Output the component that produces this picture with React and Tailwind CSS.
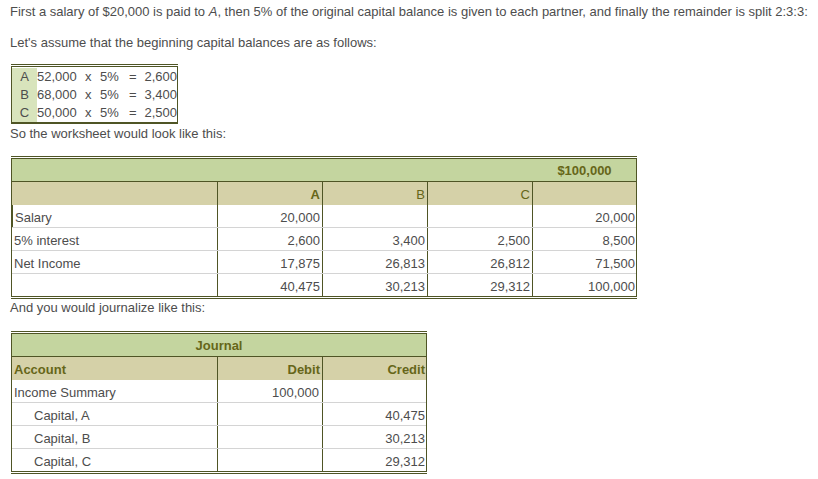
import React from "react";

const box = [
  { k: "A", base: "52,000", amt: "2,600" },
  { k: "B", base: "68,000", amt: "3,400" },
  { k: "C", base: "50,000", amt: "2,500" },
];

const sheet = [
  { label: "Salary", a: "20,000", b: "", c: "", t: "20,000", mark: true },
  { label: "5% interest", a: "2,600", b: "3,400", c: "2,500", t: "8,500" },
  { label: "Net Income", a: "17,875", b: "26,813", c: "26,812", t: "71,500" },
  { label: "", a: "40,475", b: "30,213", c: "29,312", t: "100,000" },
];

const journal = [
  { acct: "Income Summary", dr: "100,000", cr: "", indent: false },
  { acct: "Capital, A", dr: "", cr: "40,475", indent: true },
  { acct: "Capital, B", dr: "", cr: "30,213", indent: true },
  { acct: "Capital, C", dr: "", cr: "29,312", indent: true },
];

// rows are 23px tall with their 1px rule, so cells themselves are 22px
function Cell({ children, className = "", tall = false }) {
  return (
    <div className={`${tall ? "h-[23px]" : "h-[22px]"} pt-[3px] leading-[19px] whitespace-nowrap ${className}`}>
      {children}
    </div>
  );
}

function Worksheet() {
  return (
    <div className="w-[626px] border-y border-[#4f5525] py-px">
      <div className="border border-[#4f5525]">
        {/* green band */}
        <div className="flex h-[23px] bg-[#c4d59f] border-b border-[#4f5525] font-bold text-[#666619]">
          <div className="flex-1" />
          <div className="w-[103px] pt-[1px] leading-[21px] text-center">$100,000</div>
        </div>
        {/* partner heads */}
        <div className="grid grid-cols-[206px_105px_105px_105px_103px] bg-[#d5d1a8] text-[#666619]">
          <Cell tall className="border-r border-[#4f5525]" />
          <Cell tall className="border-r border-[#4f5525] pr-[2px] text-right font-bold">A</Cell>
          <Cell tall className="border-r border-[#4f5525] pr-[2px] text-right">B</Cell>
          <Cell tall className="border-r border-[#4f5525] pr-[2px] text-right">C</Cell>
          <Cell tall />
        </div>
        {sheet.map((r, i) => (
          <div
            key={i}
            className={`grid grid-cols-[206px_105px_105px_105px_103px] ${i < sheet.length - 1 ? "border-b border-[#d4d4d4]" : ""}`}
          >
            <Cell className={`border-r border-[#4f5525] pl-[2px] ${r.mark ? "border-l border-l-[#4f5525]" : ""}`}>
              {r.label}
            </Cell>
            <Cell className="border-r border-[#4f5525] pr-[2px] text-right">{r.a}</Cell>
            <Cell className="border-r border-[#4f5525] pr-[2px] text-right">{r.b}</Cell>
            <Cell className="border-r border-[#4f5525] pr-[2px] text-right">{r.c}</Cell>
            <Cell className="pr-[1px] text-right">{r.t}</Cell>
          </div>
        ))}
      </div>
    </div>
  );
}

function Journal() {
  return (
    <div className="w-[416px] border-y border-[#4f5525] py-px">
      <div className="border border-[#4f5525]">
        <div className="h-[23px] bg-[#c4d59f] border-b border-[#4f5525] pt-[1px] leading-[21px] text-center font-bold text-[#666619]">
          Journal
        </div>
        <div className="grid grid-cols-[206px_105px_103px] bg-[#d5d1a8] font-bold text-[#666619]">
          <Cell tall className="border-r border-[#4f5525] pl-[2px]">Account</Cell>
          <Cell tall className="border-r border-[#4f5525] pr-[2px] text-right">Debit</Cell>
          <Cell tall className="pr-[1px] text-right">Credit</Cell>
        </div>
        {journal.map((r, i) => (
          <div
            key={i}
            className={`grid grid-cols-[206px_105px_103px] ${i < journal.length - 1 ? "border-b border-[#d4d4d4]" : ""}`}
          >
            <Cell className={`border-r border-[#4f5525] ${r.indent ? "pl-[22px]" : "pl-[2px]"}`}>{r.acct}</Cell>
            <Cell className="border-r border-[#4f5525] pr-[3px] text-right">{r.dr}</Cell>
            <Cell className="pr-[1px] text-right">{r.cr}</Cell>
          </div>
        ))}
      </div>
    </div>
  );
}

export default function App() {
  return (
    <div className="min-h-[479px] bg-white pl-[10px] pt-[3px] text-[13px] text-[#4d4d4d] font-['Liberation_Sans',Arial,sans-serif]">
      <p className="leading-[18px] whitespace-nowrap">
        First a salary of $20,000 is paid to <i>A</i>, then 5% of the original capital balance is given to each partner, and finally the remainder is split 2:3:3:
      </p>
      <p className="mt-[13px] leading-[18px]">Let's assume that the beginning capital balances are as follows:</p>

      <div className="mt-[12px] ml-px w-[167px] border-t border-[#4f5525] pt-px">
        <div className="border-x border-t border-b-2 border-[#4f5525] pt-px">
          {box.map((r) => (
            <div key={r.k} className="flex h-[18px] leading-[18px] whitespace-nowrap">
              <div className="w-[25px] bg-[#d8e4bc] text-center">{r.k}</div>
              <div className="w-[48px]">{r.base}</div>
              <div className="w-[15px]">x</div>
              <div className="w-[29px]">5%</div>
              <div className="w-[15px]">=</div>
              <div className="flex-1 text-right">{r.amt}</div>
            </div>
          ))}
        </div>
      </div>

      <p className="mt-px leading-[18px]">So the worksheet would look like this:</p>

      <div className="mt-[13px] ml-px">
        <Worksheet />
      </div>

      <p className="leading-[18px]">And you would journalize like this:</p>

      <div className="mt-[14px] ml-px">
        <Journal />
      </div>
    </div>
  );
}
